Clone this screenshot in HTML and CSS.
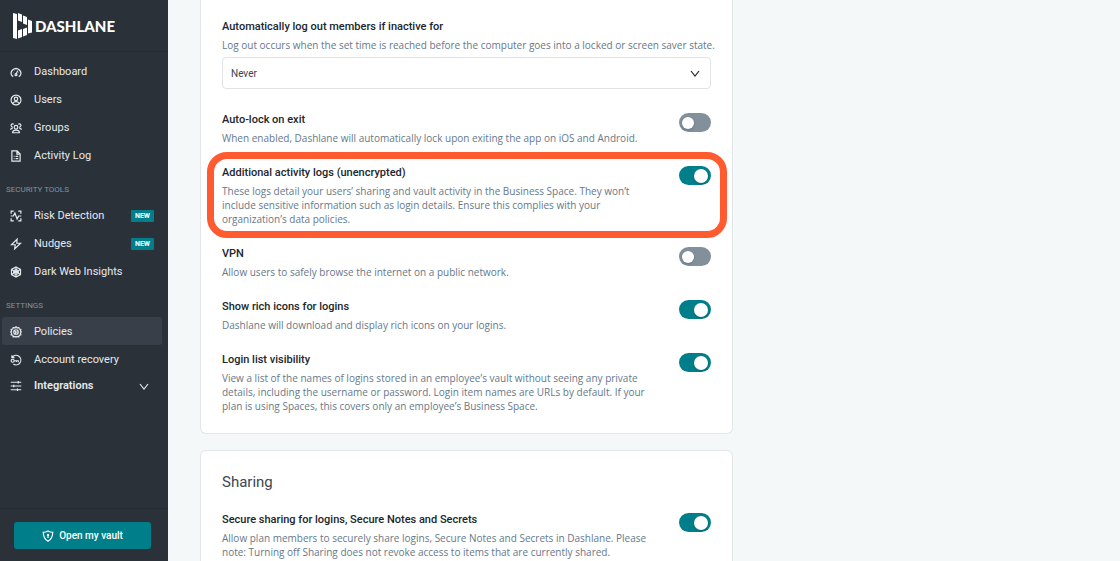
FILE: index.html
```html
<!DOCTYPE html>
<html lang="en">
<head>
    <meta charset="UTF-8">
    <meta name="viewport" content="width=device-width, initial-scale=1.0">
    <title>Policies - Dashlane</title>
    <link rel="stylesheet" href="styles.css">
</head>
<body>
    <aside id="sidebar">
        <div id="logo">
            <svg width="20" height="26" viewBox="0 0 20 26" fill="#fff">
                <path d="M0 0l4 1v25l-4-1z"/>
                <path d="M5 0l4 1.500v7.500l-4-1.500z"/>
                <path d="M10 2.500l4 1.500v8l-4-1.500z"/>
                <path d="M15 6.500l4 1.500v11.500l-4 1z"/>
                <path d="M5 17.500l4-1.500v8l-4 1.500z"/>
                <path d="M10 16l4-1.500v7.500l-4 1.500z"/>
            </svg>
            <span>DASHLANE</span>
        </div>

        <nav>
            <ul>
                <li><a href="#">
                    <svg class="icon" viewBox="0 0 16 16"><path d="M4.500 13.500H3A6.300 6.300 0 1 1 13 13.500h-1.500M8 11l2.500-5M4 9h.5M5.500 5.500l.4.400M8 4v.5M12 9h-.5"/><circle cx="8" cy="11.500" r="1.300"/></svg>
                    Dashboard
                </a></li>
                <li><a href="#">
                    <svg class="icon" viewBox="0 0 16 16"><circle cx="8" cy="8" r="6.600"/><circle cx="8" cy="6.500" r="2.300"/><path d="M3.800 12.500c1-1.700 2.400-2.300 4.200-2.300s3.200.6 4.200 2.300"/></svg>
                    Users
                </a></li>
                <li><a href="#">
                    <svg class="icon" viewBox="0 0 16 16"><circle cx="8" cy="7" r="2.400"/><path d="M3.500 14.300c0-2.600 1.800-3.600 4.500-3.600s4.500 1 4.500 3.600zM5 3.300A2 2 0 1 0 3.600 6.500M11 3.300a2 2 0 1 1 1.400 3.200M.8 10.500c.2-1.500 1.200-2.300 3-2.300M15.200 10.500c-.2-1.500-1.200-2.300-3-2.300"/></svg>
                    Groups
                </a></li>
                <li><a href="#">
                    <svg class="icon" viewBox="0 0 16 16"><path d="M2.500 1.200h7l4 4v9.600h-11zM9.200 1.500v4h4M5 8.500h1M7.500 8.500h3.500M5 11.500h1M7.500 11.500h3.500"/></svg>
                    Activity Log
                </a></li>
            </ul>

            <h2>SECURITY TOOLS</h2>
            <ul>
                <li><a href="#">
                    <svg class="icon" viewBox="0 0 16 16"><path d="M1.500 5V1.500H5M11 1.500h3.500V5M14.500 11v3.500H11M5 14.500H1.500V11M1 8h3.500l2-4 3 8 2-4H15"/></svg>
                    Risk Detection
                    <span class="badge">NEW</span>
                </a></li>
                <li><a href="#">
                    <svg class="icon" viewBox="0 0 16 16"><path d="M9.500 1.500L2 9h5l-.8 5.500L14 7H9z"/></svg>
                    Nudges
                    <span class="badge">NEW</span>
                </a></li>
                <li><a href="#">
                    <svg class="icon" viewBox="0 0 16 16"><path d="M8 1.200l6 3.400v6.800l-6 3.400-6-3.400V4.600zM8 1.200v13.600M2 4.600l12 6.800M14 4.600L2 11.400M8 4.500l3 1.800v3.500l-3 1.700-3-1.700V6.300z"/></svg>
                    Dark Web Insights
                </a></li>
            </ul>

            <h2>SETTINGS</h2>
            <ul>
                <li><a href="#" class="active">
                    <svg class="icon" viewBox="0 0 16 16"><path d="M8 1l1.500 1.600 2.200-.7.600 2.200 2.200.6-.7 2.200L15 8l-1.200 1.500.7 2.200-2.200.6-.6 2.200-2.200-.7L8 15l-1.500-1.200-2.200.7-.6-2.200-2.200-.6.700-2.200L1 8l1.200-1.100-.7-2.200 2.200-.6.600-2.200 2.200.7z"/><circle cx="8" cy="8" r="3"/><path d="M5.500 6L8 8h3M8 8l-1.500 3"/></svg>
                    Policies
                </a></li>
                <li><a href="#">
                    <svg class="icon" viewBox="0 0 16 16"><path d="M3 4.500A6.300 6.300 0 1 1 4.500 13.300M2.500 1.500v3.200h3.500"/><circle cx="3.500" cy="9" r="2"/><path d="M5.500 9h5.500v2M8.500 9v1.500"/></svg>
                    Account recovery
                </a></li>
            </ul>
            <button type="button" id="integrations">
                <svg class="icon" viewBox="0 0 16 16"><path d="M1 3h14M1 8h14M1 13h14M11 1.200v3.600M5 6.200v3.600M10 11.200v3.600"/></svg>
                Integrations
                <svg class="chevron" viewBox="0 0 10 10"><path d="M1 3l4 5 4-5"/></svg>
            </button>
        </nav>

        <div id="vault">
            <button type="button">
                <svg class="icon" viewBox="0 0 16 16"><path d="M8 1.200c2 1.300 4 1.800 6.300 1.800 0 6-1.600 9.500-6.300 12C3.300 12.500 1.700 9 1.700 3 4 3 6 2.500 8 1.200z"/><circle cx="8" cy="6.500" r=".8"/><path d="M8 7v3.500"/></svg>
                Open my vault
            </button>
        </div>
    </aside>

    <main>
        <section class="card first">
            <div class="field">
                <label for="logout">Automatically log out members if inactive for</label>
                <p>Log out occurs when the set time is reached before the computer goes into a locked or screen saver state.</p>
                <div class="select">
                    <select id="logout">
                        <option>Never</option>
                    </select>
                    <svg class="chevron" viewBox="0 0 10 10"><path d="M1 3l4 5 4-5"/></svg>
                </div>
            </div>

            <div class="setting">
                <div class="info">
                    <label for="autolock">Auto-lock on exit</label>
                    <p>When enabled, Dashlane will automatically lock upon exiting the app on iOS and Android.</p>
                </div>
                <input type="checkbox" class="toggle" id="autolock">
            </div>
            <div class="setting highlight">
                <div class="info">
                    <label for="logs">Additional activity logs (unencrypted)</label>
                    <p>These logs detail your users’ sharing and vault activity in the Business Space. They won’t<br>include sensitive information such as login details. Ensure this complies with your<br>organization’s data policies.</p>
                </div>
                <input type="checkbox" class="toggle" id="logs" checked>
            </div>
            <div class="setting">
                <div class="info">
                    <label for="vpn">VPN</label>
                    <p>Allow users to safely browse the internet on a public network.</p>
                </div>
                <input type="checkbox" class="toggle" id="vpn">
            </div>
            <div class="setting">
                <div class="info">
                    <label for="icons">Show rich icons for logins</label>
                    <p>Dashlane will download and display rich icons on your logins.</p>
                </div>
                <input type="checkbox" class="toggle" id="icons" checked>
            </div>
            <div class="setting">
                <div class="info">
                    <label for="visibility">Login list visibility</label>
                    <p>View a list of the names of logins stored in an employee’s vault without seeing any private<br>details, including the username or password. Login item names are URLs by default. If your<br>plan is using Spaces, this covers only an employee’s Business Space.</p>
                </div>
                <input type="checkbox" class="toggle" id="visibility" checked>
            </div>
        </section>

        <section class="card">
            <h1>Sharing</h1>
            <div class="setting">
                <div class="info">
                    <label for="sharing">Secure sharing for logins, Secure Notes and Secrets</label>
                    <p>Allow plan members to securely share logins, Secure Notes and Secrets in Dashlane. Please<br>note: Turning off Sharing does not revoke access to items that are currently shared.</p>
                </div>
                <input type="checkbox" class="toggle" id="sharing" checked>
            </div>
        </section>
    </main>
</body>
</html>
```
FILE: styles.css
```css
* {
    margin: 0;
    padding: 0;
    box-sizing: border-box;
}

body {
    display: flex;
    height: 100vh;
    overflow: hidden;
    background-color: #f4f8f9;
    font-family: Roboto, "Liberation Sans", sans-serif;
    font-size: 10px;
    line-height: 14px;
    color: #66788a;
}

button, select {
    font-family: inherit;
    cursor: pointer;
}

svg {
    flex-shrink: 0;
}

.icon, .chevron {
    fill: none;
    stroke: currentColor;
    stroke-width: 1.6;
}

.icon {
    width: 12px;
    height: 12px;
}

.chevron {
    width: 10px;
    height: 10px;
    stroke-width: 1.2;
}

/* Sidebar */
#sidebar {
    width: 168px;
    flex-shrink: 0;
    display: flex;
    flex-direction: column;
    background-color: #2a3139;
    color: #e6eaed;
}

#logo {
    display: flex;
    align-items: center;
    gap: 2px;
    height: 52px;
    padding-left: 13px;
    border-bottom: 1px solid #262c33;
    font-family: Lato, sans-serif;
    font-size: 15px;
    font-weight: 900;
    color: white;
}

nav {
    flex: 1;
    padding: 5px 6px 0 2px;
}

nav ul {
    list-style-type: none;
}

nav a, #integrations {
    display: flex;
    align-items: center;
    gap: 12px;
    width: 100%;
    height: 28px;
    padding: 1px 8px 0;
    border-radius: 3px;
    font-size: 11px;
    color: #e6eaed;
    text-decoration: none;
}

nav a:hover, nav a.active {
    background-color: #383f48;
}

nav h2 {
    margin: 15px 0 5px 4px;
    font-size: 8px;
    line-height: 12px;
    font-weight: 400;
    color: #84919c;
}

.badge {
    margin-left: auto;
    padding: 0 4px;
    border-radius: 1px;
    background-color: #007f8a;
    font-size: 7px;
    line-height: 12px;
    font-weight: 700;
    color: white;
}

#integrations {
    height: 24px;
    background: none;
    border: none;
    font-weight: 600;
}

#integrations .chevron {
    margin-left: auto;
    margin-right: 5px;
}

#vault {
    padding: 13px 17px 12px 14px;
    border-top: 1px solid #262c33;
}

#vault button {
    display: flex;
    align-items: center;
    justify-content: center;
    gap: 5px;
    width: 100%;
    height: 27px;
    border: none;
    border-radius: 3px;
    background-color: #007f8a;
    font-size: 10px;
    font-weight: 500;
    color: white;
}

/* Policies */
main {
    flex: 1;
    height: 100%;
    overflow: hidden;
    padding: 0 32px;
}

.card {
    max-width: 533px;
    margin-bottom: 16px;
    padding: 21px 21px 20px;
    border: 1px solid #e2e6e9;
    border-radius: 6px;
    background-color: white;
}

.first {
    padding-top: 19px;
    border-top: none;
    border-top-left-radius: 0;
    border-top-right-radius: 0;
}

h1 {
    margin-bottom: 20px;
    font-size: 15px;
    line-height: 20px;
    font-weight: 400;
    color: #3d4650;
}

label {
    display: block;
    margin-bottom: 3px;
    font-size: 11px;
    line-height: 16px;
    font-weight: 500;
    color: #20262c;
}

p {
    font-family: "Open Sans", sans-serif;
}

.field {
    margin-bottom: 23px;
}

.field p {
    white-space: nowrap;
}

.select {
    position: relative;
    margin-top: 5px;
}

.select select {
    display: block;
    width: 100%;
    height: 32px;
    padding: 0 8px;
    appearance: none;
    border: 1px solid #dfe3e6;
    border-radius: 4px;
    background-color: white;
    font-size: 10px;
    color: #3d4650;
}

.select .chevron {
    position: absolute;
    top: 11px;
    right: 11px;
    color: #20262c;
    pointer-events: none;
}

.setting {
    display: flex;
    justify-content: space-between;
    align-items: flex-start;
    position: relative;
    margin-bottom: 20px;
}

.setting:last-child {
    margin-bottom: 0;
}

.highlight::after {
    content: "";
    position: absolute;
    inset: -13px -16px -12px -15px;
    border: 7px solid #ff5a30;
    border-radius: 20px;
    pointer-events: none;
}

.toggle {
    appearance: none;
    display: flex;
    align-items: center;
    flex-shrink: 0;
    width: 32px;
    height: 19px;
    margin-top: 1px;
    padding: 0 3px;
    border-radius: 10px;
    background-color: #82909c;
    cursor: pointer;
}

.toggle::before {
    content: "";
    width: 12px;
    height: 12px;
    border-radius: 50%;
    background-color: white;
    box-shadow: 0 1px 2px rgba(0, 0, 0, 0.2);
}

.toggle:checked {
    justify-content: flex-end;
    background-color: #007f8a;
}

.toggle:checked::before {
    width: 14px;
    height: 14px;
}
```
